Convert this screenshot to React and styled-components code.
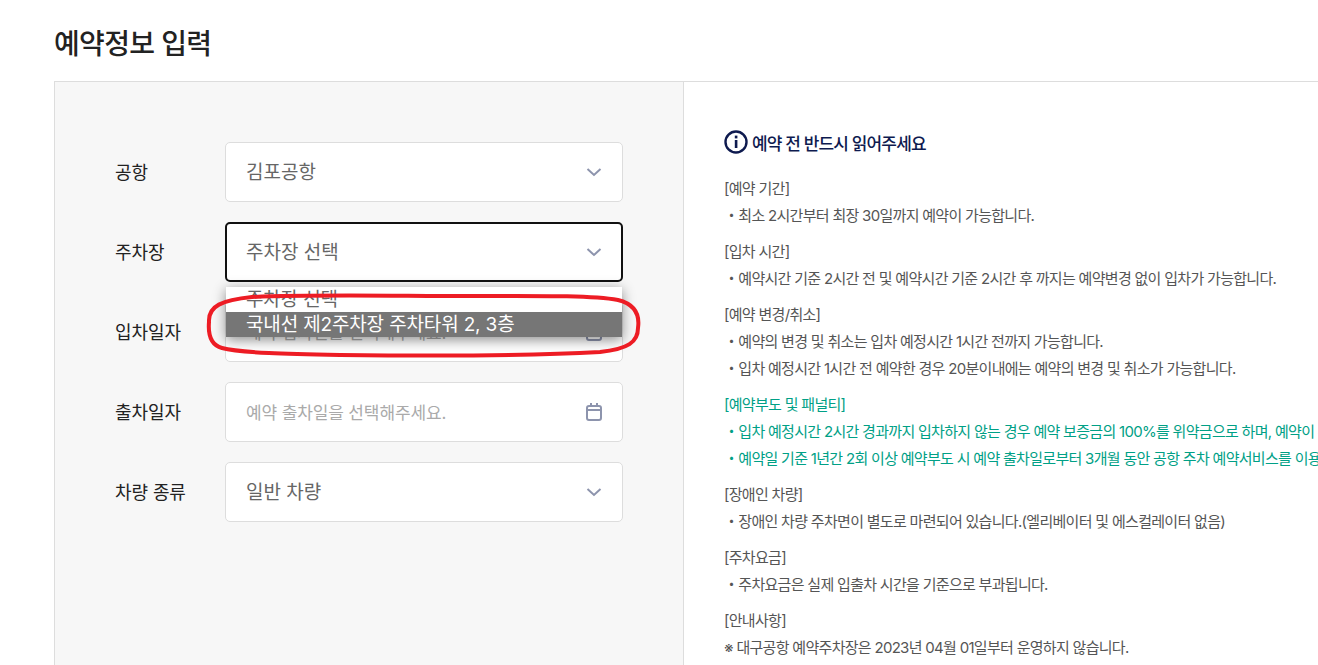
import React from "react";
import styled, { createGlobalStyle } from "styled-components";

const Global = createGlobalStyle`
  html, body { margin: 0; padding: 0; height: 665px; overflow: hidden; background: #fff; }
  body { font-family: Inter, "Noto Sans CJK KR", "Noto Sans", sans-serif; }
`;

const Page = styled.div`
  position: relative;
  width: 1318px;
  height: 665px;
  overflow: hidden;
  padding: 24px 0 0 54px;
  box-sizing: border-box;
`;
const Title = styled.h1`
  margin: 0 0 17px;
  font-size: 28px;
  line-height: 40px;
  font-weight: 500;
  letter-spacing: -0.65px;
  color: #222;
`;
const Panel = styled.div`
  display: grid;
  grid-template-columns: 629px 800px;
  width: 1500px;
  height: 700px;
  border: 1px solid #ddd;
  box-sizing: border-box;
`;
const FormCol = styled.div`
  background: #f7f7f7;
  border-right: 1px solid #ddd;
  padding: 60px 0 0 60px;
  display: flex;
  flex-direction: column;
  gap: 20px;
  box-sizing: border-box;
`;
const Row = styled.div`
  position: relative;
  display: flex;
  align-items: center;
`;
const Label = styled.div`
  width: 110px;
  font-size: 18px;
  line-height: 24px;
  margin-top: 2px;
  color: #222;
  letter-spacing: -0.1px;
`;
const Field = styled.div`
  width: 398px;
  height: 60px;
  box-sizing: border-box;
  background: #fff;
  border: ${(p) => (p.$focus ? "2px solid #111" : "1px solid #ddd")};
  border-radius: 5px;
  padding: 0 ${(p) => (p.$focus ? 18 : 19)}px 0 ${(p) => (p.$focus ? 19 : 20)}px;
  display: flex;
  align-items: center;
  justify-content: space-between;
  font-size: ${(p) => (p.$placeholder ? 17 : 19)}px;
  letter-spacing: ${(p) => (p.$placeholder ? "-0.13px" : "0")};
  color: ${(p) => (p.$placeholder ? "#aaa" : "#666")};
`;
const FieldText = styled.span`
  line-height: 24px;
  margin-top: 2px;
`;
const Menu = styled.div`
  position: absolute;
  left: 111px;
  top: 65px;
  width: 396px;
  height: 50px;
  overflow: hidden;
  background: #fff;
  box-shadow: 0 3px 12px rgba(0, 0, 0, 0.45);
  font-size: 19px;
  z-index: 2;
`;
const Option = styled.div`
  height: 25px;
  line-height: 26px;
  padding-left: 20px;
  white-space: nowrap;
  letter-spacing: -0.15px;
  color: ${(p) => (p.$selected ? "#fff" : "#666")};
  background: ${(p) => (p.$selected ? "#767676" : "#fff")};
`;
const InfoCol = styled.div`
  padding: 45px 0 0 40px;
  background: #fff;
`;
const InfoHead = styled.div`
  display: flex;
  align-items: center;
  gap: 4px;
  height: 30px;
  margin-bottom: 18px;
  font-size: 17px;
  font-weight: 500;
  letter-spacing: -0.85px;
  color: #0e1a4f;
`;
const Group = styled.div`
  margin-bottom: 9px;
`;
const Line = styled.div`
  font-size: 15px;
  line-height: 27px;
  white-space: nowrap;
  letter-spacing: -0.7px;
  color: ${(p) => (p.$green ? "#00a086" : "#555")};
`;
const Overlay = styled.svg`
  position: absolute;
  left: 0;
  top: 0;
  z-index: 5;
  pointer-events: none;
`;

const Chevron = () => (
  <svg width="18" height="18" viewBox="0 0 18 18" fill="none">
    <path d="M2.5 6 L9 12 L15.5 6" stroke="#8d94ad" strokeWidth="2" />
  </svg>
);
const Calendar = () => (
  <svg width="18" height="20" viewBox="0 0 18 20" fill="none" stroke="#8d94ad" strokeWidth="2">
    <rect x="2" y="4" width="14" height="14" rx="2" />
    <path d="M2 8H16M6 1V5M12 1V5" />
  </svg>
);
const InfoIcon = () => (
  <svg width="24" height="24" viewBox="0 0 24 24" fill="none">
    <circle cx="12" cy="12" r="10.5" stroke="#0e1a4f" strokeWidth="2.4" />
    <rect x="10.8" y="10" width="2.6" height="8" fill="#0e1a4f" />
    <rect x="10.8" y="5.6" width="2.6" height="2.8" fill="#0e1a4f" />
  </svg>
);

const fields = [
  { label: "공항", value: "김포공항", icon: <Chevron /> },
  { label: "주차장", value: "주차장 선택", icon: <Chevron />, focus: true, menu: true },
  { label: "입차일자", value: "예약 입차일을 선택해주세요.", icon: <Calendar />, placeholder: true },
  { label: "출차일자", value: "예약 출차일을 선택해주세요.", icon: <Calendar />, placeholder: true },
  { label: "차량 종류", value: "일반 차량", icon: <Chevron /> },
];

const groups = [
  { lines: ["[예약 기간]", "・최소 2시간부터 최장 30일까지 예약이 가능합니다."] },
  { lines: ["[입차 시간]", "・예약시간 기준 2시간 전 및 예약시간 기준 2시간 후 까지는 예약변경 없이 입차가 가능합니다."] },
  { lines: ["[예약 변경/취소]", "・예약의 변경 및 취소는 입차 예정시간 1시간 전까지 가능합니다.", "・입차 예정시간 1시간 전 예약한 경우 20분이내에는 예약의 변경 및 취소가 가능합니다."] },
  { green: true, lines: ["[예약부도 및 패널티]", "・입차 예정시간 2시간 경과까지 입차하지 않는 경우 예약 보증금의 100%를 위약금으로 하며, 예약이 취소됩니다.", "・예약일 기준 1년간 2회 이상 예약부도 시 예약 출차일로부터 3개월 동안 공항 주차 예약서비스를 이용할 수 없습니다."] },
  { lines: ["[장애인 차량]", "・장애인 차량 주차면이 별도로 마련되어 있습니다.(엘리베이터 및 에스컬레이터 없음)"] },
  { lines: ["[주차요금]", "・주차요금은 실제 입출차 시간을 기준으로 부과됩니다."] },
  { lines: ["[안내사항]", "※ 대구공항 예약주차장은 2023년 04월 01일부터 운영하지 않습니다."] },
];

export default function App() {
  return (
    <Page>
      <Global />
      <Title>예약정보 입력</Title>
      <Panel>
        <FormCol>
          {fields.map((f) => (
            <Row key={f.label}>
              <Label>{f.label}</Label>
              <Field $focus={f.focus} $placeholder={f.placeholder}>
                <FieldText>{f.value}</FieldText>
                {f.icon}
              </Field>
              {f.menu && (
                <Menu>
                  <Option>주차장 선택</Option>
                  <Option $selected>국내선 제2주차장 주차타워 2, 3층</Option>
                </Menu>
              )}
            </Row>
          ))}
        </FormCol>
        <InfoCol>
          <InfoHead>
            <InfoIcon />
            예약 전 반드시 읽어주세요
          </InfoHead>
          {groups.map((g) => (
            <Group key={g.lines[0]}>
              {g.lines.map((l) => (
                <Line key={l} $green={g.green}>{l}</Line>
              ))}
            </Group>
          ))}
        </InfoCol>
      </Panel>
      <Overlay width="1318" height="665" viewBox="0 0 1318 665" fill="none">
        <path
          d="M209 322 C208 306 222 300 252 297 C310 294 400 296 470 296 C530 296 590 295 618 300 C634 304 640 314 638 328 C638 342 628 349 600 352 C530 356 420 356 340 355 C290 354 240 353 222 348 C211 345 208 334 209 322 Z"
          stroke="#ed1c24"
          strokeWidth="4"
        />
      </Overlay>
    </Page>
  );
}
